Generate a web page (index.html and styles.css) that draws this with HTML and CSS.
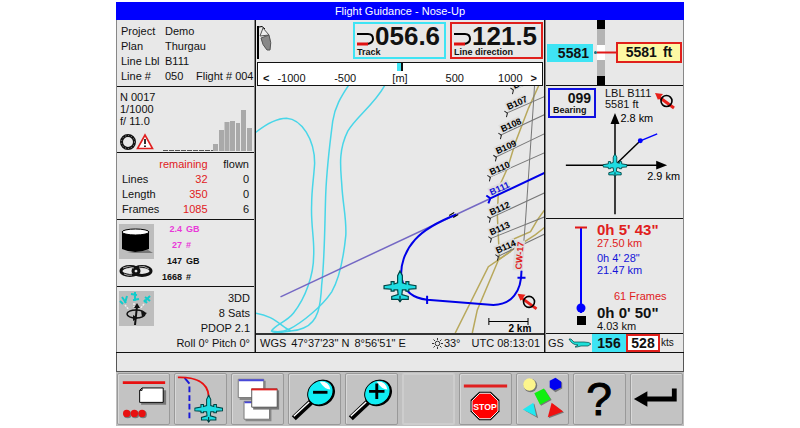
FILE: index.html
```html
<!DOCTYPE html>
<html lang="en">
<head>
    <meta charset="UTF-8">
    <meta name="viewport" content="width=device-width, initial-scale=1.0">
    <title>Flight Guidance - Nose-Up</title>
    <link rel="stylesheet" href="styles.css">
</head>
<body>
    <!-- shared symbols -->
    <svg class="symbols" aria-hidden="true">
        <symbol id="plane" viewBox="-14 -14 28 28">
            <path d="M0 -13 L2 -9 V-3 L5 -2 V-4 H7.500 V-1.500 L13.500 -0.500 V2 L7.500 2.500 V4 H5 V3 H2 L1.600 7 L7 8.500 V11 L1.500 11 L0 13 L-1.500 11 L-7 11 V8.500 L-1.600 7 L-2 3 H-5 V4 H-7.500 V2.500 L-13.500 2 V-0.500 L-7.500 -1.500 V-4 H-5 V-2 L-2 -3 V-9 Z" fill="#1fdce2" stroke="#044" stroke-width="1"/>
            <path d="M0 8 V13" stroke="#033" stroke-width="1"/>
        </symbol>
        <symbol id="no-photo" viewBox="0 0 20 18">
            <path d="M4 5 L19 16" stroke="#e8201a" stroke-width="3"/>
            <path d="M0 1 L8 2 L3 8 Z" fill="#e8201a"/>
            <circle cx="11.500" cy="9" r="5.500" fill="none" stroke="#000" stroke-width="1.600"/>
        </symbol>
        <symbol id="turn" viewBox="0 0 18 14">
            <path d="M0 2 H11 Q16 2 16 7 Q16 11 10 12" fill="none" stroke="#000" stroke-width="2"/>
            <path d="M0 12 H11" stroke="#e01010" stroke-width="3"/>
        </symbol>
    </svg>

    <div class="app">
        <h1 class="title">Flight Guidance - Nose-Up</h1>

        <main class="main">
            <div class="side">
                <section class="panel info">
                    <span>Project</span><span class="wide">Demo</span>
                    <span>Plan</span><span class="wide">Thurgau</span>
                    <span>Line Lbl</span><span class="wide">B111</span>
                    <span>Line #</span><span>050</span><span>Flight # 004</span>
                </section>

                <section class="panel camera">
                    <div>N 0017<br>1/1000<br>f/ 11.0</div>
                    <div class="camera-bottom">
                        <svg width="34" height="18" viewBox="0 0 34 18">
                            <circle cx="8" cy="9" r="6.500" fill="none" stroke="#111" stroke-width="3"/>
                            <circle cx="8" cy="9" r="6.500" fill="none" stroke="#999" stroke-width="1" stroke-dasharray="1 2"/>
                            <path d="M25 2 L32.500 15.500 H17.500 Z" fill="#fff" stroke="#e02020" stroke-width="1.600"/>
                            <path d="M25 6 V11 M25 12.500 V14" stroke="#000" stroke-width="1.600"/>
                        </svg>
                        <svg class="histogram" width="90" height="42" viewBox="0 0 90 42">
                            <path d="M0 41.500 H50" stroke="#555" stroke-dasharray="5 1"/>
                            <path d="M50 35h5v7h-5z M56 21h5v21h-5z M61.500 13h5v29h-5z M67 12h5v30h-5z M73 14h4v28h-4z M78 1h5v41h-5z M84 19h5v23h-5z" fill="#a9a9a9"/>
                        </svg>
                    </div>
                </section>

                <section class="panel">
                    <table class="counts">
                        <tr><td></td><th class="red" scope="col">remaining</th><th class="flown" scope="col">flown</th></tr>
                        <tr><th scope="row">Lines</th><td class="red">32</td><td>0</td></tr>
                        <tr><th scope="row">Length</th><td class="red">350</td><td>0</td></tr>
                        <tr><th scope="row">Frames</th><td class="red">1085</td><td>6</td></tr>
                    </table>
                </section>

                <section class="panel storage">
                    <div class="storage-icons">
                        <svg width="35" height="35" viewBox="0 0 35 35">
                            <rect width="35" height="35" fill="#bdbdbd"/>
                            <path d="M8 29 H34 L29 26 Z" fill="#777"/>
                            <path d="M3 8 V25 Q16 31 30 25 V8 Z" fill="#000"/>
                            <ellipse cx="16.500" cy="8" rx="13.500" ry="3" fill="#fff" stroke="#000"/>
                        </svg>
                        <svg width="34" height="16" viewBox="0 0 34 16">
                            <g fill="none" stroke="#111" stroke-width="3">
                                <ellipse cx="11" cy="8" rx="9" ry="4.500"/>
                                <ellipse cx="23" cy="8" rx="9" ry="4.500"/>
                            </g>
                            <path d="M4 5 Q9 2 15 5 M20 4 Q25 2 30 6 M5 11 Q9 13 13 12" fill="none" stroke="#aaa"/>
                        </svg>
                    </div>
                    <div class="storage-values">
                        <span class="pink">2.4</span><span class="pink">GB</span>
                        <span class="pink">27</span><span class="pink">#</span>
                        <span>147</span><span>GB</span>
                        <span>1668</span><span>#</span>
                    </div>
                </section>

                <section class="panel gps">
                    <svg width="35" height="35" viewBox="0 0 35 35">
                        <rect width="35" height="35" fill="#bdbdbd"/>
                        <g stroke="#1cc" stroke-width="2">
                            <path d="M3 6 L7 12 M6 12 L8 5 M1 10 L4 13"/>
                            <path d="M16 1 V10 M12 3 L18 4 M14 9 L20 8"/>
                            <path d="M25 11 L31 5 M26 6 L31 10 M25 9 L28 12"/>
                        </g>
                        <path d="M6 14 L10 19 M15 12 V16 M25 13 L21 18" stroke="#eee" stroke-width="1.500" stroke-dasharray="2 1"/>
                        <ellipse cx="17" cy="23" rx="9" ry="4" fill="none" stroke="#111" stroke-width="1.500"/>
                        <path d="M16 34 L18 15" stroke="#111" stroke-width="2"/>
                        <path d="M18 12 L21 17 H15 Z M22 20 L28 22 L23 26 Z M14 24 V30 L19 27 Z" fill="#111"/>
                    </svg>
                    <div>3DD<br>8 Sats<br>PDOP 2.1<br>Roll 0° Pitch 0°</div>
                </section>
            </div>

            <div class="center">
                <header class="directions">
                    <svg class="pen" width="18" height="34" viewBox="0 0 18 34">
                        <path d="M1 1 V34" stroke="#000" stroke-width="2"/>
                        <path d="M2 2 Q5 0 8 4" fill="none" stroke="#000"/>
                        <path d="M3 11 L6 3 L12 10 Z" fill="#eee" stroke="#555"/>
                        <path d="M4 13 L12 10 Q15 18 13 25 L10 25 Q5 20 4 13 Z" fill="#888" stroke="#555"/>
                    </svg>
                    <div class="readout cyan-box">
                        <div class="readout-value"><svg width="18" height="14"><use href="#turn"/></svg>056.6</div>
                        <div class="readout-label">Track</div>
                    </div>
                    <div class="readout red-box">
                        <div class="readout-value"><svg width="18" height="14"><use href="#turn"/></svg>121.5</div>
                        <div class="readout-label">Line direction</div>
                    </div>
                </header>

                <div class="deviation">
                    <div class="marker"></div>
                    <div class="ticks">
                        <div class="tick-left"><b>&lt;</b><span>-1000</span></div>
                        <div>-500</div>
                        <div>[m]</div>
                        <div>500</div>
                        <div class="tick-right"><span>1000</span><b>&gt;</b></div>
                    </div>
                </div>

                <svg class="map" viewBox="256 87 288 246" preserveAspectRatio="xMidYMid slice">
                    <!-- rivers -->
                    <g class="river">
                        <path d="M254 135 C266 125 276 119 287 119 C302 120 315 140 315 164 C314 180 312 190 312 205 C311 225 315 240 314 256 C314 275 306 298 294 313 C287 322 275 325 272 331 C275 334 285 332 291 331"/>
                        <path d="M349 86 C341 98 335 108 333 122 C330 145 327 170 326 195 C325 225 325 260 322 285 C321 305 319 322 304 328 C297 331 294 331 291 331 C281 326 274 315 254 313"/>
                        <path d="M385 86 C375 105 356 118 348 132 C338 152 341 170 342 185 C343 205 347 220 346 236 C344 256 340 278 332 292 C322 307 302 323 290 329 C284 332 277 332 272 331"/>
                    </g>
                    <!-- borders -->
                    <g class="border-line">
                        <path d="M538 87 L528 109 L515 143 L507 169 L498 189 L497 217 L499 258 L477 310 L472 333"/>
                        <path d="M545 209 L537 220 L530 232 L512 240 L510 252 L488 267 L455 333"/>
                        <path d="M545 227 L535 235 L515 248 L497 261"/>
                    </g>
                    <!-- survey lines -->
                    <g class="survey">
                        <path d="M534 86 L533 103 L525 221 L521 271"/>
                        <path d="M512 91 L524 86 M506 114 L545 97 M500 136 L545 115 M495 158 L545 134 M489 178 L545 153 M489 219 L545 193 M490 239 L545 217 M497 257 L545 234"/>
                    </g>
                    <path class="starts" d="M510 89 l3 2 l-1 4 M504 112 l3 2 l-1 4 M498 134 l3 2 l-1 4 M493 156 l3 2 l-1 4 M487 176 l3 2 l-1 4 M487 217 l3 2 l-1 4 M488 237 l3 2 l-1 4 M495 255 l3 2 l-1 4"/>
                    <g class="line-label red-label" transform="translate(521 270) rotate(-85)"><rect x="-1" y="-9" width="30" height="10"/><text>CW-17</text></g>
                    <g class="line-label" transform="translate(514 90) rotate(-24)"><rect x="-1" y="-8" width="22" height="9"/><text>B106</text></g>
                    <g class="line-label" transform="translate(508 111) rotate(-24)"><rect x="-1" y="-8" width="22" height="9"/><text>B107</text></g>
                    <g class="line-label" transform="translate(502 133) rotate(-24)"><rect x="-1" y="-8" width="22" height="9"/><text>B108</text></g>
                    <g class="line-label" transform="translate(497 155) rotate(-24)"><rect x="-1" y="-8" width="22" height="9"/><text>B109</text></g>
                    <g class="line-label" transform="translate(491 176) rotate(-24)"><rect x="-1" y="-8" width="22" height="9"/><text>B110</text></g>
                    <g class="line-label blue-label" transform="translate(491 196) rotate(-24)"><rect x="-1" y="-8" width="22" height="9"/><text>B111</text></g>
                    <g class="line-label" transform="translate(491 216) rotate(-24)"><rect x="-1" y="-8" width="22" height="9"/><text>B112</text></g>
                    <g class="line-label" transform="translate(491 236) rotate(-24)"><rect x="-1" y="-8" width="22" height="9"/><text>B113</text></g>
                    <g class="line-label" transform="translate(497 254) rotate(-24)"><rect x="-1" y="-8" width="22" height="9"/><text>B114</text></g>
                    <!-- current line and turn -->
                    <path class="planned" d="M281 297 L490 199"/>
                    <g class="route">
                        <path d="M490 199 L545 173 M486 196 L490 199 L488 204"/>
                        <path d="M456 215 C436 223 424 230 415 240 C405 251 399 267 402 280 C404 290 412 298 427 300 L493 305 C511 305 521 292 521 271"/>
                        <path d="M427 296 V304 M517 278 H525"/>
                    </g>
                    <path d="M449 216 l5 -3 M453 218 l5 -3" stroke="#000"/>
                    <use href="#plane" x="382" y="270" width="36" height="33"/>
                    <use href="#no-photo" x="517" y="293" width="20" height="18"/>
                    <path d="M488.500 321.500 H527.500 M488.500 318 V325 M527.500 318 V325" stroke="#000" fill="none"/>
                    <text class="scale-text" x="508" y="332">2 km</text>
                </svg>

                <footer class="position">
                    <span>WGS</span><span>47°37'23" N</span><span>8°56'51" E</span>
                    <span class="sun">
                        <svg width="11" height="11" viewBox="0 0 11 11">
                            <g fill="none" stroke="#333">
                                <circle cx="5.500" cy="5.500" r="2.300"/>
                                <path d="M5.500 0 V2 M5.500 9 V11 M0 5.500 H2 M9 5.500 H11 M1.500 1.500 L3 3 M8 8 L9.500 9.500 M1.500 9.500 L3 8 M8 3 L9.500 1.500"/>
                            </g>
                        </svg>33°</span>
                    <span>UTC 08:13:01</span>
                </footer>
            </div>

            <div class="side">
                <section class="panel altitude">
                    <div class="alt-current">5581</div>
                    <svg width="23" height="65" viewBox="0 0 23 65">
                        <rect x="4" width="8" height="65" fill="#b4b4b4"/>
                        <path d="M4 0h8v9h-8z M4 56h8v9h-8z" fill="#000"/>
                        <rect x="4" y="25" width="8" height="15" fill="#fff"/>
                        <path d="M4 32.500 H23" stroke="#e01818" stroke-width="2"/>
                        <circle cx="2.500" cy="32.500" r="1.500" fill="#17707c"/>
                    </svg>
                    <div class="alt-target"><span>5581</span><span>ft</span></div>
                </section>

                <section class="panel bearing">
                    <div class="bearing-head">
                        <div class="bearing-box"><div class="bearing-value">099</div><div class="readout-label">Bearing</div></div>
                        <div class="bearing-line">LBL B111<br>5581 ft</div>
                        <svg width="20" height="18"><use href="#no-photo"/></svg>
                    </div>
                    <svg class="diagram" viewBox="546 118 138 101">
                        <path d="M566 165.500 H660 M615.500 122 V215" stroke="#000" stroke-width="1.500"/>
                        <path d="M668 165.500 L657 161 V170 Z M615.500 113 L611 124 H620 Z" fill="#000"/>
                        <path d="M617 164 L641 141" stroke="#000" stroke-width="1.500"/>
                        <path d="M641 141 L658 134" stroke="#00f" stroke-width="1.500"/>
                        <circle cx="641" cy="141" r="2.500" fill="#00f"/>
                        <use href="#plane" x="603" y="153" width="25" height="25"/>
                        <text x="621" y="122">2.8 km</text>
                        <text x="648" y="180">2.9 km</text>
                    </svg>
                </section>

                <section class="panel timing">
                    <svg width="14" height="102" viewBox="0 0 14 102">
                        <path d="M7 5 V90" stroke="#00f" stroke-width="2"/>
                        <path d="M1 4.500 H13" stroke="#e01818" stroke-width="2"/>
                        <circle cx="7" cy="85" r="4.500" fill="#00f"/>
                        <rect x="3" y="93" width="9" height="9" fill="#000"/>
                    </svg>
                    <div class="times">
                        <div class="big red">0h 5' 43"</div>
                        <div class="red">27.50 km</div>
                        <div class="blue next">0h 4' 28"</div>
                        <div class="blue">21.47 km</div>
                        <div class="red frames">61 Frames</div>
                        <div class="big">0h 0' 50"</div>
                        <div>4.03 km</div>
                    </div>
                </section>

                <section class="panel speed">
                    <span class="gs">GS</span>
                    <svg width="24" height="10" viewBox="0 0 24 10">
                        <path d="M1 1 H3 L6 4 L16 4 Q22 4 23 6 L20 8 L13 8 L9 9 H7 L10 7 Q4 7 1 1 Z" fill="#1fe0d8" stroke="#044" stroke-width="0.700"/>
                    </svg>
                    <span class="speed-now">156</span>
                    <span class="speed-target">528</span>
                    <span class="kts">kts</span>
                </section>
            </div>
        </main>

        <div class="message"></div>

        <nav class="toolbar">
            <button type="button" aria-label="Take frames">
                <svg viewBox="0 0 53 52">
                    <path d="M5 9 H49" stroke="#e81010" stroke-width="3"/>
                    <path d="M25 17 H50 V32 H24 Z" fill="#777"/>
                    <path d="M25 14.500 H47 V29.500 H22.500 V17 Z" fill="#fff" stroke="#000"/>
                    <path d="M22.500 17 H25 V14.500" fill="none" stroke="#000"/>
                    <g fill="#777"><circle cx="10" cy="42" r="4"/><circle cx="18" cy="42" r="4"/><circle cx="26" cy="42" r="4"/></g>
                    <g fill="#e81010"><circle cx="9" cy="41" r="3.800"/><circle cx="17" cy="41" r="3.800"/><circle cx="25" cy="41" r="3.800"/></g>
                </svg>
            </button>
            <button type="button" aria-label="Approach">
                <svg viewBox="0 0 53 52">
                    <path d="M10 4 L15 10" stroke="#1818d8" stroke-width="2"/>
                    <path d="M15 13 V48" stroke="#1818d8" stroke-width="2" stroke-dasharray="6 3"/>
                    <path d="M3 3.500 C20 3 34 8 35 23" fill="none" stroke="#e81010" stroke-width="2"/>
                    <use href="#plane" x="20" y="21" width="30" height="30"/>
                </svg>
            </button>
            <button type="button" aria-label="Windows">
                <svg viewBox="0 0 53 52">
                    <path d="M8 7 H35 V27 H8 Z M14 30 H41 V49 H14 Z" fill="#888"/>
                    <path d="M6.500 5.500 H33 V24.500 H6.500 Z M12.500 28.500 H39 V47 H12.500 Z" fill="#fff" stroke="#777"/>
                    <path d="M7 6.500 H33 M13 29.500 H39" stroke="#4848d8" stroke-width="2"/>
                    <path d="M22 17 H49 V37 H22 Z" fill="#777"/>
                    <path d="M20.500 15.500 H47 V34.500 H20.500 Z" fill="#fff" stroke="#555"/>
                    <path d="M20 16 H47" stroke="#e02020" stroke-width="2"/>
                </svg>
            </button>
            <button type="button" aria-label="Zoom out">
                <svg viewBox="0 0 53 52">
                    <path d="M5 46 L23 29" stroke="#000" stroke-width="6"/>
                    <path d="M5 44 L21 29" stroke="#fff" stroke-width="1.500"/>
                    <g transform="rotate(-40 33 19)">
                        <ellipse cx="33" cy="20" rx="15" ry="13" fill="#000"/>
                        <ellipse cx="32.500" cy="19" rx="14" ry="12" fill="#10eef4" stroke="#000"/>
                    </g>
                    <path d="M32 8 Q41 7 43 16 Q37 16 32 8 Z" fill="#fff"/>
                    <path d="M25 19 H40" stroke="#000" stroke-width="3"/>
                </svg>
            </button>
            <button type="button" aria-label="Zoom in">
                <svg viewBox="0 0 53 52">
                    <path d="M5 46 L23 29" stroke="#000" stroke-width="6"/>
                    <path d="M5 44 L21 29" stroke="#fff" stroke-width="1.500"/>
                    <g transform="rotate(-40 33 19)">
                        <ellipse cx="33" cy="20" rx="15" ry="13" fill="#000"/>
                        <ellipse cx="32.500" cy="19" rx="14" ry="12" fill="#10eef4" stroke="#000"/>
                    </g>
                    <path d="M32 8 Q41 7 43 16 Q37 16 32 8 Z" fill="#fff"/>
                    <path d="M24 18 H40 M32 10 V26" stroke="#000" stroke-width="3"/>
                </svg>
            </button>
            <button type="button" class="empty" aria-label="Unused" disabled></button>
            <button type="button" aria-label="Stop">
                <svg viewBox="0 0 53 52">
                    <path d="M4 12.500 H49" stroke="#e02020" stroke-width="3"/>
                    <path d="M20 18.500 H32 L41 27 V39 L32 48 H20 L11 39 V27 Z" fill="#000"/>
                    <path d="M20.500 20 H31.500 L39.500 28 V38.500 L31.500 46.500 H20.500 L12.500 38.500 V28 Z" fill="#f00" stroke="#fff"/>
                    <text class="stop-text" x="26" y="37">STOP</text>
                </svg>
            </button>
            <button type="button" aria-label="Symbols">
                <svg viewBox="0 0 53 52">
                    <g fill="#777" transform="translate(1 1)">
                        <circle cx="13" cy="11" r="7"/>
                        <path d="M34 7 L40 4 L46 8 L46 14 L39 18 L34 14 Z"/>
                        <path d="M18 20 L28 15 L35 26 L24 32 Z"/>
                        <path d="M7 37 L17 30 L21 45 Z"/>
                        <path d="M36 30 L48 39 L32 45 Z"/>
                    </g>
                    <circle cx="13" cy="11" r="6.500" fill="#fdf58c"/>
                    <path d="M34 7 L40 4 L46 8 L46 14 L39 17 L34 14 Z" fill="#0000f0"/>
                    <path d="M18 20 L28 15 L35 26 L24 32 Z" fill="#10f010"/>
                    <path d="M6 37 L17 30 L20 44 Z" fill="#20e8f0"/>
                    <path d="M36 30 L48 39 L32 45 Z" fill="#f01010"/>
                </svg>
            </button>
            <button type="button" aria-label="Help">
                <svg viewBox="0 0 53 52"><text class="help-text" x="26" y="43">?</text></svg>
            </button>
            <button type="button" aria-label="Enter">
                <svg viewBox="0 0 53 52">
                    <path d="M15 26 H45 V15" fill="none" stroke="#000" stroke-width="5"/>
                    <path d="M3 26 L17 18 V34 Z" fill="#000"/>
                </svg>
            </button>
        </nav>
    </div>
</body>
</html>
```

FILE: styles.css
```css
:root {
    --panel: #e8e8e8;
    --line: #111;
    --red: #e0201c;
    --blue: #1414d8;
    --cyan: #3fe4f4;
}

* {
    box-sizing: border-box;
}

body {
    margin: 0;
    background: #fff;
    color: #111;
    font: 11px/15px "Liberation Sans", Arial, sans-serif;
}

svg {
    display: block;
    flex: none;
}

.symbols {
    position: absolute;
    width: 0;
    height: 0;
}

.app {
    width: 71%;
    min-width: 560px;
    margin: 0 auto;
    padding-top: 2px;
}

.title {
    margin: 0;
    background: #00f;
    color: #fff;
    font-size: 11px;
    font-weight: normal;
    line-height: 18px;
    text-align: center;
}

.main {
    display: grid;
    grid-template-columns: 139px 1fr 139px;
    border-bottom: 1px solid var(--line);
    background: var(--panel);
}

.side {
    display: flex;
    flex-direction: column;
    border-left: 1px solid #888;
    border-right: 1px solid #888;
}

.panel {
    border-bottom: 1px solid var(--line);
}

.panel:last-child {
    border-bottom: 0;
}

.red { color: var(--red); }
.blue { color: var(--blue); }
.pink { color: #e838d8; }

/* left column */
.info {
    display: grid;
    grid-template-columns: 44px 31px 1fr;
    padding: 4px 0 2px 4px;
    white-space: nowrap;
}

.wide {
    grid-column: 2 / 4;
}

.camera {
    padding: 4px 1px 1px 3px;
    line-height: 12px;
    height: 66px;
    display: flex;
    flex-direction: column;
    justify-content: space-between;
}

.camera-bottom {
    display: flex;
    align-items: flex-end;
    justify-content: space-between;
    height: 18px;
}

.counts {
    width: 100%;
    padding: 4px 5px 2px;
    border-collapse: separate;
    border-spacing: 0;
}

.counts td,
.counts th {
    padding: 0;
    font-weight: normal;
    text-align: right;
}

.counts th[scope="row"] {
    text-align: left;
}

.counts .flown {
    width: 45px;
}

.storage {
    display: flex;
    gap: 8px;
    padding: 1px 2px;
}

.storage-icons {
    display: flex;
    flex-direction: column;
    gap: 4px;
    padding-top: 3px;
}

.storage-values {
    display: grid;
    grid-template-columns: 20px 1fr;
    column-gap: 4px;
    font-size: 9px;
    font-weight: bold;
    line-height: 16px;
}

.storage-values span:nth-child(odd) {
    text-align: right;
}

.gps {
    display: flex;
    padding: 4px 4px 1px 2px;
}

.gps div {
    flex: 1;
    margin-left: -8px;
    text-align: right;
    white-space: nowrap;
}

/* center column */
.center {
    display: flex;
    flex-direction: column;
    min-width: 0;
    border-left: 1px solid var(--line);
    border-right: 1px solid var(--line);
}

.directions {
    display: flex;
    gap: 4px;
    padding: 2px 1px 3px;
}

.pen {
    margin: 3px auto 0 0;
}

.readout {
    width: 93px;
    height: 37px;
    padding-left: 2px;
    border: 2px solid var(--cyan);
}

.red-box {
    border-color: var(--red);
}

.readout-value {
    display: flex;
    align-items: center;
    font-size: 26px;
    font-weight: bold;
    line-height: 24px;
}

.readout-value svg {
    margin-top: 6px;
}

.readout-label {
    font-size: 9px;
    font-weight: bold;
    line-height: 9px;
}

.deviation {
    height: 24px;
    margin: 0 1px;
    border: 1px solid var(--line);
    background: #fff;
}

.marker {
    width: 6px;
    height: 8px;
    margin: 0 auto;
    border-right: 2px solid #111;
    background: var(--cyan);
}

.ticks {
    display: grid;
    grid-template-columns: repeat(5, 1fr);
    padding: 0 5px;
    line-height: 14px;
    text-align: center;
}

.tick-left,
.tick-right {
    display: flex;
    gap: 8px;
}

.tick-right {
    justify-content: flex-end;
}

.map {
    width: 100%;
    height: auto;
    flex: 1;
    min-height: 0;
}

.river path {
    fill: none;
    stroke: #48d6e8;
    stroke-width: 1.5;
}

.border-line path {
    fill: none;
    stroke: #b8a85c;
    stroke-width: 1.5;
}

.survey path,
.starts {
    fill: none;
    stroke: #777;
}

.starts {
    stroke: #222;
}

.line-label rect {
    fill: #ddd;
}

.line-label text {
    font-size: 9px;
    font-weight: bold;
}

.red-label text { fill: var(--red); }
.blue-label text { fill: var(--blue); }

.planned {
    stroke: #7468c4;
    stroke-width: 1.5;
}

.route path {
    fill: none;
    stroke: #0000e8;
    stroke-width: 2;
}

.scale-text {
    font-size: 10px;
    font-weight: bold;
}

.position {
    display: flex;
    gap: 5px;
    padding: 1px 4px;
    border-top: 2px solid #333;
    white-space: nowrap;
}

.sun {
    display: flex;
    align-items: center;
    gap: 1px;
    margin: 0 6px 0 auto;
}

/* right column */
.altitude {
    display: flex;
    align-items: center;
    padding: 0 1px;
    font-size: 14px;
    font-weight: bold;
}

.alt-current {
    width: 46px;
    padding-right: 4px;
    background: var(--cyan);
    line-height: 18px;
    text-align: right;
}

.alt-target {
    display: flex;
    flex: 1;
    justify-content: center;
    gap: 6px;
    border: 2px solid var(--red);
    background: #fdf8a4;
    line-height: 17px;
}

.bearing-head {
    display: flex;
    gap: 9px;
    padding: 2px 2px 0;
    line-height: 11px;
    white-space: nowrap;
}

.bearing-head svg {
    margin: 4px 0 0 -5px;
}

.bearing-box {
    width: 48px;
    padding: 1px 3px;
    border: 2px solid #1010e0;
}

.bearing-value {
    font-size: 14px;
    font-weight: bold;
    line-height: 15px;
    text-align: right;
}

.diagram {
    width: 100%;
    height: auto;
    overflow: visible;
}

.diagram text {
    font-size: 11px;
}

.timing {
    display: flex;
    gap: 9px;
    flex: 1;
    padding: 4px 0 0 28px;
    line-height: 12px;
}

.big {
    font-size: 15px;
    font-weight: bold;
    line-height: 14px;
}

.next {
    margin-top: 3px;
}

.frames {
    margin: 14px 0 4px 17px;
}

.speed {
    display: flex;
    align-items: center;
    padding: 0 2px;
    line-height: 18px;
}

.gs {
    width: 20px;
}

.speed-now,
.speed-target {
    width: 34px;
    background: var(--cyan);
    font-size: 14px;
    font-weight: bold;
    text-align: center;
}

.speed-target {
    border: 2px solid var(--red);
    background: #fff;
    line-height: 14px;
}

.kts {
    padding-left: 1px;
    font-size: 10px;
}

/* bottom */
.message {
    height: 19px;
    border: 1px solid #555;
    border-top: 0;
    background: var(--panel);
}

.toolbar {
    display: grid;
    grid-template-columns: repeat(10, 1fr);
    gap: 4px;
    padding: 1px;
    background: #bfbfbf;
}

.toolbar button {
    padding: 0;
    border: 1px solid #999;
    border-radius: 2px;
    background: #c3c3c3;
    box-shadow: inset 1px 1px 0 #d8d8d8;
    cursor: pointer;
}

.toolbar button:active {
    background: #b0b0b0;
}

.toolbar .empty {
    border: 2px solid #cdcdcd;
    box-shadow: none;
    cursor: default;
}

.stop-text {
    fill: #fff;
    font-size: 9px;
    font-weight: bold;
    text-anchor: middle;
}

.help-text {
    font-size: 48px;
    stroke: #000;
    text-anchor: middle;
}
```
